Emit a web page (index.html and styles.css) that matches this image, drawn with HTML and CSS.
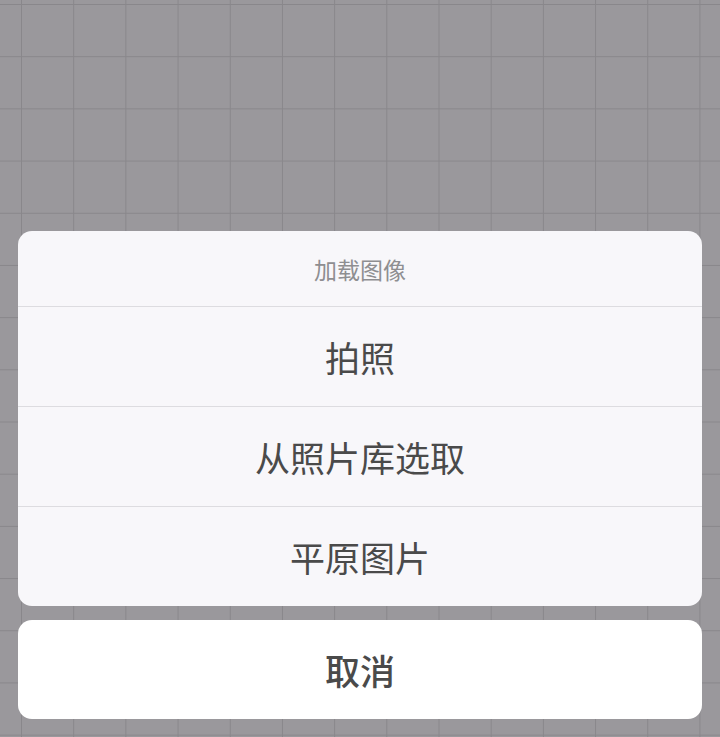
FILE: index.html
```html
<!DOCTYPE html>
<html lang="zh-CN">
<head>
  <meta charset="UTF-8" />
  <meta name="viewport" content="width=device-width, initial-scale=1.0"/>
  <title>加载图像</title>
  <link rel="stylesheet" href="styles.css">
</head>
<body>

  <!-- 底部操作菜单 -->
  <div class="sheet">
    <div class="sheet-group">
      <div class="sheet-title">加载图像</div>
      <button class="sheet-item">拍照</button>
      <button class="sheet-item">从照片库选取</button>
      <button class="sheet-item">平原图片</button>
    </div>
    <button class="sheet-cancel">取消</button>
  </div>

</body>
</html>
```

FILE: styles.css
```css
html, body {
  height: 100%;
}

body {
  margin: 0;
  font-family: "Noto Sans CJK SC", "Noto Sans", sans-serif;
  background-color: #9a989c;
  background-image:
    linear-gradient(to right, #89878b 1px, transparent 1px),
    linear-gradient(to bottom, #89878b 1px, transparent 1px);
  background-size: 52.2px 52.2px;
  background-position: 21px 4px;
  display: flex;
  flex-direction: column;
  justify-content: flex-end;
  box-sizing: border-box;
  padding: 0 18px 18px;
}

.sheet {
  display: flex;
  flex-direction: column;
  gap: 14px;
}

.sheet-group {
  background-color: #f8f7fa;
  border-radius: 14px;
  overflow: hidden;
  display: flex;
  flex-direction: column;
}

.sheet-title {
  height: 75px;
  display: flex;
  align-items: center;
  justify-content: center;
  font-size: 23px;
  color: #8e8e91;
  border-bottom: 1px solid #dddce0;
}

.sheet-item,
.sheet-cancel {
  font-family: inherit;
  border: none;
  margin: 0;
  padding: 0;
  width: 100%;
  display: flex;
  align-items: center;
  justify-content: center;
  font-size: 35px;
  color: #4a4a4a;
  cursor: pointer;
}

.sheet-item {
  height: 100px;
  background: transparent;
  border-bottom: 1px solid #dddce0;
}

.sheet-item:last-child {
  height: 99px;
  border-bottom: none;
}

.sheet-cancel {
  height: 99px;
  background-color: #fff;
  border-radius: 14px;
  font-weight: 500;
}
```
